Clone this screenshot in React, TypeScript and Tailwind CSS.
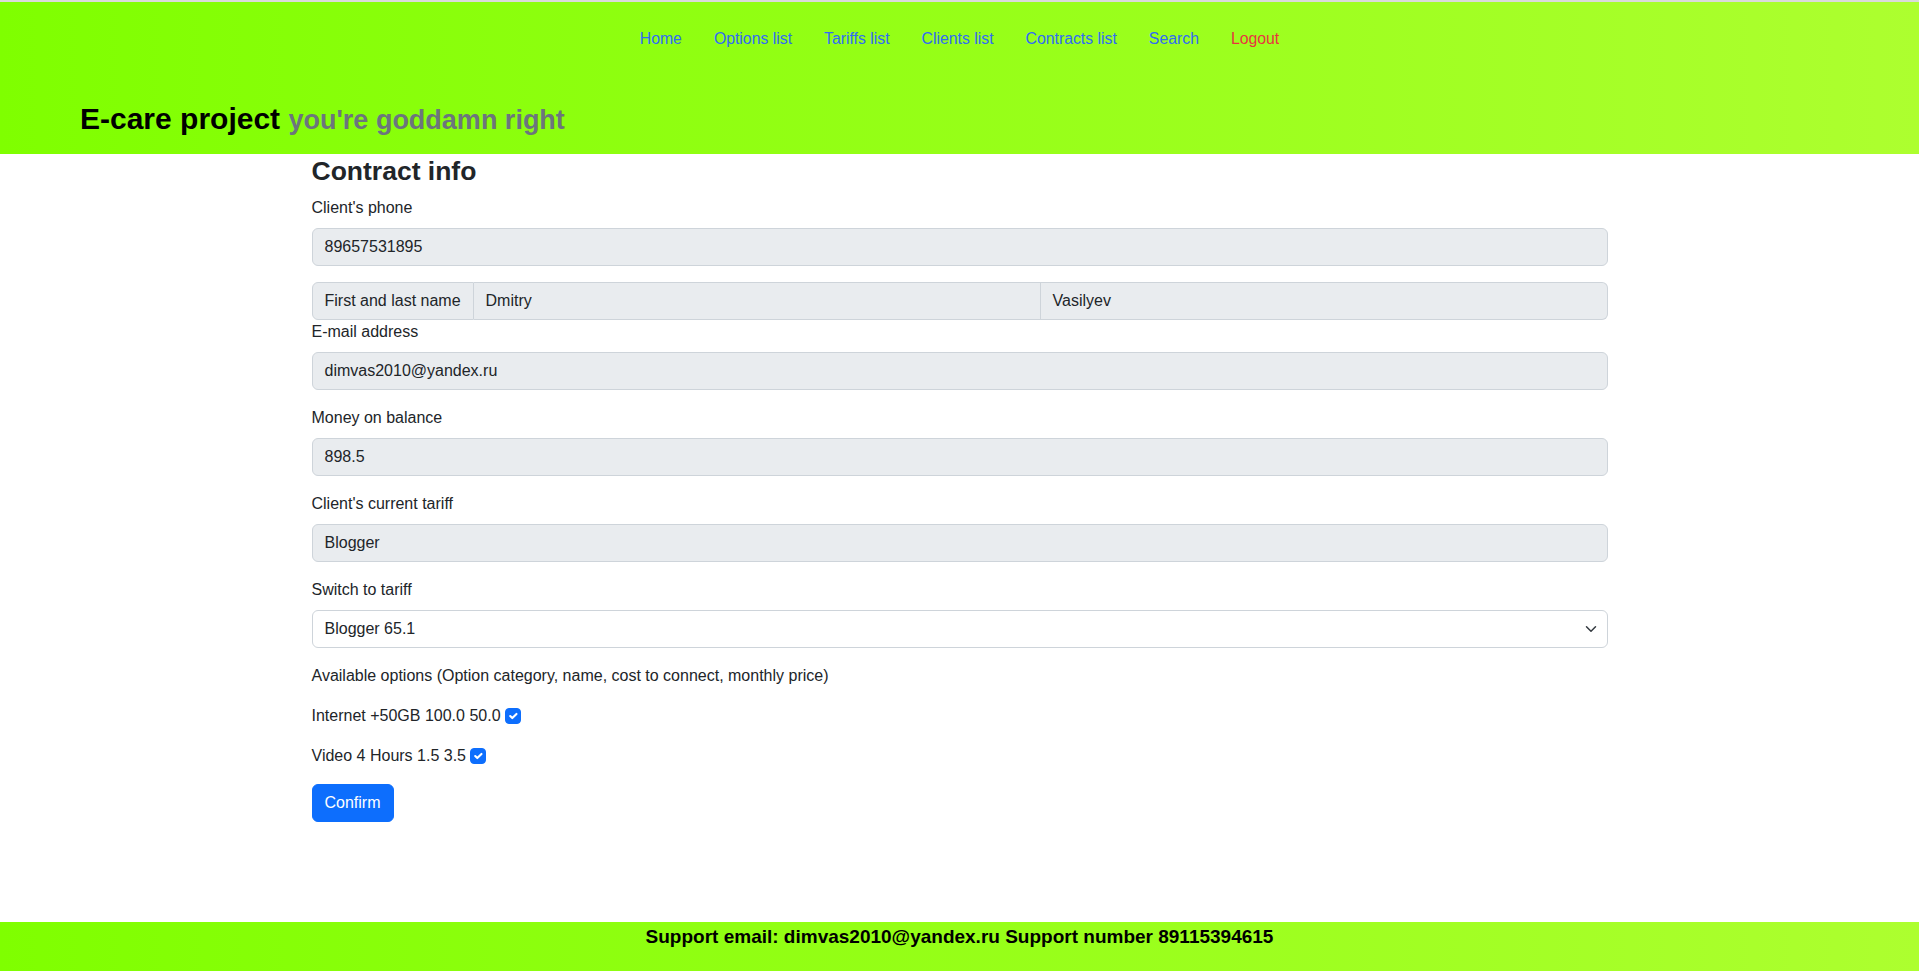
import React from "react";

const navItems = [
  "Home",
  "Options list",
  "Tariffs list",
  "Clients list",
  "Contracts list",
  "Search",
];

function Check() {
  return (
    <span className="inline-block align-top mt-1 w-4 h-4 rounded-[4px] bg-[#0d6efd] border border-[#0d6efd]">
      <svg viewBox="0 0 20 20" className="w-full h-full block">
        <path
          d="m6 10 3 3 6-6"
          fill="none"
          stroke="#fff"
          strokeWidth="3"
          strokeLinecap="round"
          strokeLinejoin="round"
        />
      </svg>
    </span>
  );
}

function Field({ label, value }: { label: string; value: string }) {
  return (
    <div>
      <label className="block leading-6 mb-2">{label}</label>
      <div className="h-[38px] mb-4 flex items-center px-3 bg-[#e9ecef] border border-[#ced4da] rounded-md">
        {value}
      </div>
    </div>
  );
}

export default function App() {
  return (
    <div
      className="min-h-screen flex flex-col bg-white text-[#212529] text-base"
      style={{ fontFamily: '"Liberation Sans", Arial, sans-serif' }}
    >
      <header className="h-[154px] border-t-2 border-[#dadada] bg-[linear-gradient(to_right,#7fff00,#adff2f)] flex flex-col">
        <nav className="pt-[17px]">
          <ul className="flex justify-center">
            {navItems.map((n) => (
              <li key={n}>
                <a className="block px-4 py-2 leading-6 text-[15.8px] text-[#2f6cf5]">{n}</a>
              </li>
            ))}
            <li>
              <a className="block px-4 py-2 leading-6 text-[15.8px] text-[#e8353f]">Logout</a>
            </li>
          </ul>
        </nav>
        <h1 className="mt-[42px] pl-[80px] text-[30px] leading-[36px] font-bold text-black">
          E-care project{" "}
          <small className="text-[27px] font-bold text-[#6c757d]">
            you're goddamn right
          </small>
        </h1>
      </header>

      <main className="w-full max-w-[1320px] mx-auto px-3">
        <h3 className="text-[26.5px] leading-[34px] font-bold mb-2 text-[#212529]">
          Contract info
        </h3>

        <Field label="Client's phone" value="89657531895" />

        <div className="flex h-[38px]">
          <div className="flex items-center px-3 bg-[#e9ecef] border border-[#ced4da] rounded-l-md whitespace-nowrap">
            First and last name
          </div>
          <div className="flex-1 flex items-center px-3 bg-[#e9ecef] border border-l-0 border-[#ced4da]">
            Dmitry
          </div>
          <div className="flex-1 flex items-center px-3 bg-[#e9ecef] border border-l-0 border-[#ced4da] rounded-r-md">
            Vasilyev
          </div>
        </div>

        <Field label="E-mail address" value="dimvas2010@yandex.ru" />
        <Field label="Money on balance" value="898.5" />
        <Field label="Client's current tariff" value="Blogger" />

        <label className="block leading-6 mb-2">Switch to tariff</label>
        <div className="h-[38px] mb-4 flex items-center justify-between px-3 bg-white border border-[#ced4da] rounded-md">
          <span>Blogger 65.1</span>
          <svg viewBox="0 0 16 16" className="w-4 h-3 mr-[-4px]" preserveAspectRatio="xMidYMid meet">
            <path
              d="m2 5 6 6 6-6"
              fill="none"
              stroke="#343a40"
              strokeWidth="2"
              strokeLinecap="round"
              strokeLinejoin="round"
            />
          </svg>
        </div>

        <p className="leading-6 mb-4">
          Available options (Option category, name, cost to connect, monthly price)
        </p>
        <p className="leading-6 mb-4">
          Internet +50GB 100.0 50.0 <Check />
        </p>
        <p className="leading-6 mb-4">
          Video 4 Hours 1.5 3.5 <Check />
        </p>

        <button className="h-[38px] px-3 rounded-md bg-[#0d6efd] border border-[#0d6efd] text-white leading-6">
          Confirm
        </button>
      </main>

      <footer className="mt-auto h-[49px] bg-[linear-gradient(to_right,#7fff00,#adff2f)] flex justify-center items-start pt-[1px]">
        <p className="text-[19px] leading-[28px] font-bold text-black">
          Support email: dimvas2010@yandex.ru Support number 89115394615
        </p>
      </footer>
    </div>
  );
}
